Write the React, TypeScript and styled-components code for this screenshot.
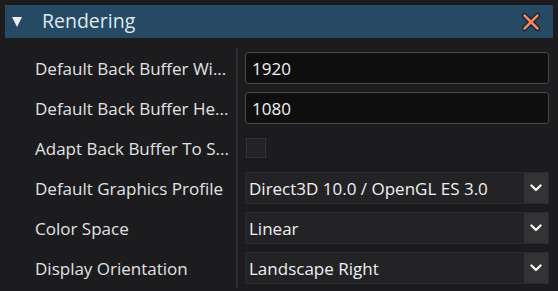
import React from 'react'
import styled, { createGlobalStyle } from 'styled-components'

const GlobalStyle = createGlobalStyle`
  html, body {
    margin: 0;
    padding: 0;
    background: #1c1c1f;
    font-family: 'Open Sans', 'Noto Sans', sans-serif;
  }
`;

const Panel = styled.div`
  width: 558px;
  height: 291px;
  overflow: hidden;
  background: #1c1c1f;
`;

const Header = styled.div`
  display: flex;
  align-items: center;
  height: 33px;
  margin: 5px 5px 0 5px;
  padding: 0 12px 0 7px;
  background: #264a63;
  color: #dfe8ef;
`;

const Arrow = styled.span`
  width: 0;
  height: 0;
  border-left: 5px solid transparent;
  border-right: 5px solid transparent;
  border-top: 10px solid #e8eef3;
  margin-right: 20px;
`;

const Title = styled.span`
  flex: 1;
  font-size: 19.5px;
  line-height: 1;
  margin-top: -2px;
`;

const Grid = styled.div`
  display: grid;
  grid-template-columns: 236px 1fr;
  margin-top: 10px;
`;

const Label = styled.div`
  display: flex;
  align-items: center;
  height: 40px;
  padding-left: 35px;
  color: #e2e2e2;
  font-size: 17px;
  white-space: nowrap;
  overflow: hidden;
`;

const Cell = styled.div`
  display: flex;
  align-items: center;
  height: 40px;
  padding: 0 9px 0 7px;
  border-left: 2px solid #2f2f31;
`;

const TextInput = styled.div`
  flex: 1;
  height: 30px;
  display: flex;
  align-items: center;
  padding-left: 6px;
  background: #0e0e0f;
  border: 1px solid #48484a;
  border-radius: 3px;
  color: #f2f2f2;
  font-size: 17px;
`;

const Check = styled.div`
  width: 18px;
  height: 18px;
  margin-left: 1px;
  background: #232326;
  border: 1px solid #333336;
`;

const Select = styled.div`
  flex: 1;
  height: 30px;
  display: flex;
  background: #232326;
  border: 1px solid #2b2b2e;
  color: #f0f0f0;
  font-size: 17px;
`;

const SelectValue = styled.div`
  flex: 1;
  display: flex;
  align-items: center;
  padding-left: 3px;
  white-space: nowrap;
`;

const SelectButton = styled.div`
  width: 24px;
  display: flex;
  align-items: center;
  justify-content: center;
  background: #333335;
`;

const Chevron = () => (
  <svg width="12" height="8" viewBox="0 0 12 8">
    <path d="M1.5 1.5 L6 6 L10.5 1.5" fill="none" stroke="#f4f4f4" strokeWidth="2.4" strokeLinecap="round" strokeLinejoin="round" />
  </svg>
);

const CloseIcon = () => (
  <svg width="20" height="20" viewBox="0 0 20 20">
    <path d="M3.5 3.5 L16.5 16.5 M16.5 3.5 L3.5 16.5" stroke="#1a1a1a" strokeWidth="5" strokeLinecap="round" />
    <path d="M3.5 3.5 L16.5 16.5 M16.5 3.5 L3.5 16.5" stroke="#f0856a" strokeWidth="2.6" strokeLinecap="round" />
  </svg>
);

type Row =
  | { label: string; kind: 'text'; value: string }
  | { label: string; kind: 'check' }
  | { label: string; kind: 'select'; value: string };

const rows: Row[] = [
  { label: 'Default Back Buffer Wi...', kind: 'text', value: '1920' },
  { label: 'Default Back Buffer He...', kind: 'text', value: '1080' },
  { label: 'Adapt Back Buffer To S...', kind: 'check' },
  { label: 'Default Graphics Profile', kind: 'select', value: 'Direct3D 10.0 / OpenGL ES 3.0' },
  { label: 'Color Space', kind: 'select', value: 'Linear' },
  { label: 'Display Orientation', kind: 'select', value: 'Landscape Right' },
];

export default function App() {
  return (
    <Panel>
      <GlobalStyle />
      <Header>
        <Arrow />
        <Title>Rendering</Title>
        <CloseIcon />
      </Header>
      <Grid>
        {rows.map((row) => (
          <React.Fragment key={row.label}>
            <Label>{row.label}</Label>
            <Cell>
              {row.kind === 'text' && <TextInput>{row.value}</TextInput>}
              {row.kind === 'check' && <Check />}
              {row.kind === 'select' && (
                <Select>
                  <SelectValue>{row.value}</SelectValue>
                  <SelectButton>
                    <Chevron />
                  </SelectButton>
                </Select>
              )}
            </Cell>
          </React.Fragment>
        ))}
      </Grid>
    </Panel>
  );
}
